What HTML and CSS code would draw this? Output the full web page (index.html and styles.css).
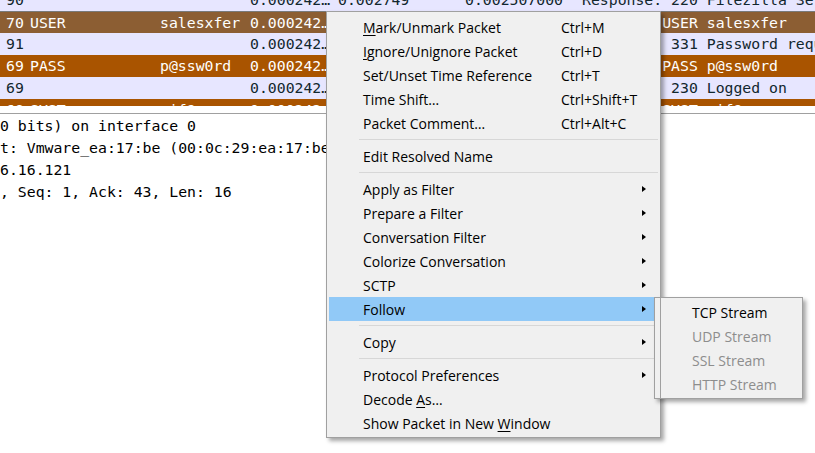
FILE: index.html
```html
<!DOCTYPE html>
<html>
<head>
<meta charset="utf-8">
<link rel="stylesheet" href="styles.css">
</head>
<body>
<div class="app">
  <div class="plist">
    <div class="rows">
      <div class="row tcp"><span class="c no">90</span><span class="c cmd"></span><span class="c arg"></span><span class="c t1">0.000242000</span><span class="c t2">0.002749</span><span class="c t3">0.002507000</span><span class="c info">Response: 220 Filezilla Server 0.9.60 beta</span></div>
      <div class="row user sel"><span class="c no">70</span><span class="c cmd">USER</span><span class="c arg">salesxfer</span><span class="c t1">0.000242000</span><span class="c t2">0.003021</span><span class="c t3">0.000272000</span><span class="c info">Request: USER salesxfer</span></div>
      <div class="row tcp"><span class="c no">91</span><span class="c cmd"></span><span class="c arg"></span><span class="c t1">0.000242000</span><span class="c t2">0.003324</span><span class="c t3">0.000303000</span><span class="c info">Response: 331 Password required for salesxfer</span></div>
      <div class="row pass"><span class="c no">69</span><span class="c cmd">PASS</span><span class="c arg">p@ssw0rd</span><span class="c t1">0.000242000</span><span class="c t2">0.003612</span><span class="c t3">0.000288000</span><span class="c info">Request: PASS p@ssw0rd</span></div>
      <div class="row tcp"><span class="c no">69</span><span class="c cmd"></span><span class="c arg"></span><span class="c t1">0.000242000</span><span class="c t2">0.004003</span><span class="c t3">0.000391000</span><span class="c info">Response: 230 Logged on</span></div>
      <div class="row pass"><span class="c no">68</span><span class="c cmd">SYST</span><span class="c arg">wif?</span><span class="c t1">0.000242000</span><span class="c t2">0.004210</span><span class="c t3">0.000207000</span><span class="c info">Request: SYST wif?</span></div>
    </div>
  </div>
  <div class="details">
    <div class="drow">0 bits) on interface 0</div>
    <div class="drow">t: Vmware_ea:17:be (00:0c:29:ea:17:be)</div>
    <div class="drow">6.16.121</div>
    <div class="drow">, Seq: 1, Ack: 43, Len: 16</div>
  </div>

  <div class="menu">
    <div class="mi"><span class="lbl"><u>M</u>ark/Unmark Packet</span><span class="sc">Ctrl+M</span></div>
    <div class="mi"><span class="lbl"><u>I</u>gnore/Unignore Packet</span><span class="sc">Ctrl+D</span></div>
    <div class="mi"><span class="lbl">Set/Unset Time Reference</span><span class="sc">Ctrl+T</span></div>
    <div class="mi"><span class="lbl">Time Shift…</span><span class="sc">Ctrl+Shift+T</span></div>
    <div class="mi"><span class="lbl">Packet Comment…</span><span class="sc">Ctrl+Alt+C</span></div>
    <div class="sep"></div>
    <div class="mi"><span class="lbl">Edit Resolved Name</span></div>
    <div class="sep"></div>
    <div class="mi"><span class="lbl">Apply as Filter</span><span class="sc"></span><span class="arr"></span></div>
    <div class="mi"><span class="lbl">Prepare a Filter</span><span class="sc"></span><span class="arr"></span></div>
    <div class="mi"><span class="lbl">Conversation Filter</span><span class="sc"></span><span class="arr"></span></div>
    <div class="mi"><span class="lbl">Colorize Conversation</span><span class="sc"></span><span class="arr"></span></div>
    <div class="mi"><span class="lbl">SCTP</span><span class="sc"></span><span class="arr"></span></div>
    <div class="mi hl"><span class="lbl">Follow</span><span class="sc"></span><span class="arr"></span></div>
    <div class="sep"></div>
    <div class="mi"><span class="lbl">Copy</span><span class="sc"></span><span class="arr"></span></div>
    <div class="sep"></div>
    <div class="mi"><span class="lbl">Protocol Preferences</span><span class="sc"></span><span class="arr"></span></div>
    <div class="mi"><span class="lbl">Decode <u>A</u>s…</span></div>
    <div class="mi"><span class="lbl">Show Packet in New <u>W</u>indow</span></div>
  </div>

  <div class="submenu">
    <div class="si">TCP Stream</div>
    <div class="si dis">UDP Stream</div>
    <div class="si dis">SSL Stream</div>
    <div class="si dis">HTTP Stream</div>
  </div>
</div>
</body>
</html>
```
FILE: styles.css
```css
* { box-sizing: border-box; }
html, body { margin: 0; padding: 0; background: #ffffff; }
body { width: 815px; height: 453px; overflow: hidden; }
.app { position: relative; width: 815px; height: 453px; overflow: hidden; }

.plist { height: 106px; overflow: hidden; }
.rows { margin-top: -11px; }
.row {
  display: grid;
  grid-template-columns: 30px 130px 90px 88px 127px 117px 1fr;
  height: 22px;
  line-height: 22px;
  font-family: "DejaVu Sans Mono", monospace;
  font-size: 14.8px;
  white-space: nowrap;
}
.row.tcp { background: #e7e6ff; color: #12272e; }
.row.user { background: #8c5e33; color: #ffffff; }
.row.pass { background: #a95400; color: #ffffff; }
.row.sel { border-top: 1px solid #7a7a7a; line-height: 21px; }
.c { overflow: hidden; white-space: nowrap; }
.no { padding-left: 6px; }
.t1 { padding-right: 7px; text-overflow: ellipsis; }

.details {
  margin-top: 7px;
  border-top: 1px solid #a0a0a0;
  padding-top: 1px;
  font-family: "DejaVu Sans Mono", monospace;
  font-size: 14.8px;
  color: #000;
}
.drow { height: 22px; line-height: 22px; white-space: nowrap; }

.menu {
  position: absolute;
  left: 326px;
  top: 11px;
  width: 335px;
  background: #f0f0f0;
  border: 1px solid #a0a0a0;
  padding: 3px 0 2px;
  box-shadow: 3px 3px 4px rgba(0,0,0,0.35);
  font-family: "Open Sans", sans-serif;
  font-size: 14px;
  color: #000;
  z-index: 2;
}
.mi {
  display: flex;
  align-items: center;
  height: 24px;
  margin: 0 5px 0 2px;
  padding-left: 34px;
  white-space: nowrap;
}
.mi.hl { background: #91c9f7; }
.lbl { width: 198px; flex: none; }
.sc { flex: 1; }
.arr {
  width: 0;
  height: 0;
  border-left: 4px solid #000;
  border-top: 3.5px solid transparent;
  border-bottom: 3.5px solid transparent;
  margin-right: 9px;
}
u { text-decoration: underline; text-underline-offset: 2px; }
.sep { height: 1px; margin: 4px 2px 4px 32px; background: #d7d7d7; }

.submenu {
  position: absolute;
  left: 654px;
  top: 297px;
  width: 149px;
  background: #f0f0f0;
  border: 1px solid #a0a0a0;
  padding: 3px 0 1px;
  box-shadow: 3px 3px 4px rgba(0,0,0,0.35);
  font-family: "Open Sans", sans-serif;
  font-size: 14px;
  color: #000;
  z-index: 3;
}
.submenu::before {
  content: "";
  position: absolute;
  left: 5px;
  top: 0;
  bottom: 0;
  width: 1px;
  background: #a0a0a0;
}
.si { height: 24px; line-height: 24px; margin: 0 2px; padding-left: 35px; white-space: nowrap; }
.si.dis { color: #8d8d8d; }
```
